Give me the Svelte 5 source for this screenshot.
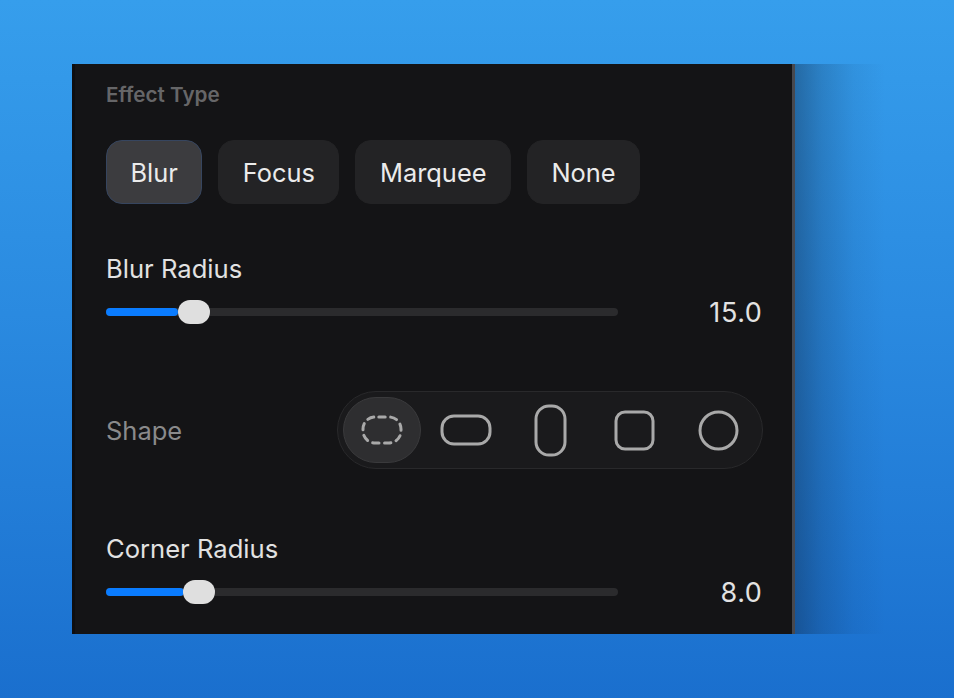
<script>
  const effects = ['Blur', 'Focus', 'Marquee', 'None'];
  const shapes = [
    { w: 38, h: 26, r: 12, dash: true },
    { w: 48, h: 28, r: 12 },
    { w: 29, h: 49, r: 13 },
    { w: 37, h: 37, r: 9 },
    { w: 37, h: 37, r: 18.5 }
  ];
</script>

<div class="stage">
  <div class="panel">
    <div class="heading">Effect Type</div>

    <div class="effects">
      {#each effects as name, i}
        <div class="effect" class:active={i === 0}>{name}</div>
      {/each}
    </div>

    <div class="control blur">
      <div class="label">Blur Radius</div>
      <div class="slider-row">
        <div class="track">
          <div class="fill" style="width: 72px"></div>
          <div class="thumb"></div>
        </div>
        <div class="value">15.0</div>
      </div>
    </div>

    <div class="shape-row">
      <div class="shape-label">Shape</div>
      <div class="shapes">
        {#each shapes as s, i}
          <div class="shape" class:active={i === 0}>
            <svg width={s.w + 4} height={s.h + 4} viewBox="0 0 {s.w + 4} {s.h + 4}">
              <rect
                x="2"
                y="2"
                width={s.w}
                height={s.h}
                rx={s.r}
                fill="none"
                stroke="#a9a9a9"
                stroke-width="3"
                stroke-linecap="round"
                stroke-dasharray={s.dash ? '6.4 5.53' : undefined}
                stroke-dashoffset={s.dash ? -3.8 : undefined}
              />
            </svg>
          </div>
        {/each}
      </div>
    </div>

    <div class="control corner">
      <div class="label">Corner Radius</div>
      <div class="slider-row">
        <div class="track">
          <div class="fill" style="width: 78px"></div>
          <div class="thumb"></div>
        </div>
        <div class="value">8.0</div>
      </div>
    </div>
  </div>
  <div class="shadow"></div>
</div>

<style>
  :global(body) {
    margin: 0;
    background: #1a6fcd;
  }

  .stage {
    box-sizing: border-box;
    display: flex;
    align-items: stretch;
    height: 698px;
    padding: 64px 0 64px 72px;
    background: linear-gradient(180deg, #369eec 0%, #2a8ae0 45%, #1a6fce 100%);
    font-family: Inter, "Liberation Sans", sans-serif;
  }

  .panel {
    box-sizing: border-box;
    flex: none;
    width: 723px;
    height: 570px;
    overflow: hidden;
    padding: 19px 31px 0 31px;
    background: #141416;
    border-left: 3px solid #0e0e10;
    border-right: 3px solid #47484e;
  }

  .shadow {
    flex: none;
    width: 90px;
    background: linear-gradient(90deg, rgba(16, 40, 70, 0.42) 0%, rgba(16, 40, 70, 0.22) 30%, rgba(16, 40, 70, 0.07) 65%, rgba(16, 40, 70, 0) 100%);
  }

  .heading {
    font-size: 20.7px;
    line-height: 24px;
    font-weight: 600;
    color: #666668;
  }

  .effects {
    display: flex;
    gap: 16px;
    margin-top: 33px;
  }

  .effect {
    box-sizing: border-box;
    height: 64px;
    padding: 0 23.5px;
    display: flex;
    align-items: center;
    font-size: 25.4px;
    color: #ebebeb;
    background: #232325;
    border: 1px solid #232325;
    border-radius: 16px;
  }

  .effect.active {
    background: #3c3c3f;
    border-color: #36455f;
  }

  .control.blur {
    margin-top: 48px;
  }

  .control.corner {
    margin-top: 63px;
  }

  .label {
    font-size: 25.6px;
    line-height: 34px;
    color: #e2e2e2;
  }

  .slider-row {
    display: flex;
    align-items: center;
    height: 40px;
    margin-top: 6px;
  }

  .track {
    position: relative;
    width: 512px;
    height: 8px;
    border-radius: 4px;
    background: #2b2b2d;
  }

  .fill {
    height: 8px;
    border-radius: 4px;
    background: #0a7cff;
  }

  .thumb {
    position: absolute;
    top: -8px;
    width: 32px;
    height: 24px;
    border-radius: 12px;
    background: #dfdfdf;
  }

  .blur .thumb {
    left: 72px;
  }

  .corner .thumb {
    left: 77px;
  }

  .value {
    flex: 1;
    margin-right: -1.5px;
    text-align: right;
    font-size: 27px;
    letter-spacing: 0.6px;
    color: #e2e2e2;
  }

  .shape-row {
    display: flex;
    align-items: center;
    justify-content: space-between;
    margin-top: 59px;
  }

  .shape-label {
    font-size: 25.5px;
    color: #8a8a8b;
  }

  .shapes {
    box-sizing: border-box;
    display: flex;
    gap: 6px;
    height: 78px;
    margin-right: -2px;
    padding: 5px;
    background: #1a1a1c;
    border: 1px solid #29292b;
    border-radius: 39px;
  }

  .shape {
    box-sizing: border-box;
    width: 78px;
    height: 66px;
    display: flex;
    align-items: center;
    justify-content: center;
    border-radius: 33px;
    border: 1px solid transparent;
  }

  .shape.active {
    background: #2e2e30;
    border-color: #3a3a3c;
  }
</style>
